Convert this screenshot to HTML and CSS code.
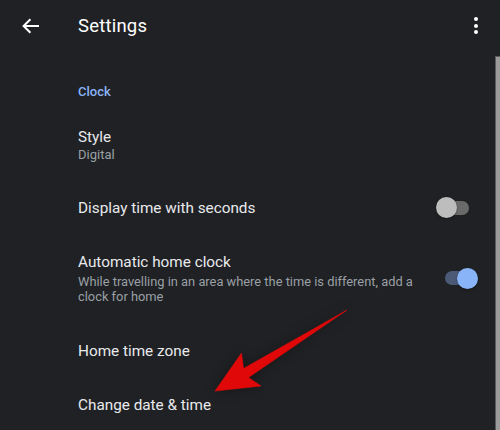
FILE: index.html
```html
<!DOCTYPE html>
<html>
<head>
<meta charset="utf-8">
<link rel="stylesheet" href="styles.css">
</head>
<body>
<div class="app">
  <header class="topbar">
    <div class="back">
      <svg width="18" height="16" viewBox="0 0 18 16"><path d="M17 8H1.8M8.4 1.2L1.6 8l6.8 6.8" fill="none" stroke="#fff" stroke-width="2"/></svg>
    </div>
    <div class="title">Settings</div>
    <div class="menu"><span></span><span></span><span></span></div>
  </header>
  <div class="body">
    <main class="content">
      <div class="section">Clock</div>
      <div class="row">
        <div class="text">
          <div class="primary">Style</div>
          <div class="secondary">Digital</div>
        </div>
      </div>
      <div class="row">
        <div class="text"><div class="primary">Display time with seconds</div></div>
        <div class="switch off"><div class="track"></div><div class="thumb"></div></div>
      </div>
      <div class="row multi">
        <div class="text">
          <div class="primary">Automatic home clock</div>
          <div class="secondary long">While travelling in an area where the time is different, add a<br>clock for home</div>
        </div>
        <div class="switch on"><div class="track"></div><div class="thumb"></div></div>
      </div>
      <div class="row">
        <div class="text"><div class="primary">Home time zone</div></div>
      </div>
      <div class="row">
        <div class="text"><div class="primary">Change date &amp; time</div></div>
      </div>
    </main>
    <div class="scrollbar"></div>
  </div>
  <svg class="pointer" width="500" height="430" viewBox="0 0 500 430">
    <polygon points="347,310 243.5,368.5 241.5,353 215,391 261,386 248.5,377.5" fill="#e00808" stroke="#e00808" stroke-width="0.6" stroke-linejoin="round"/>
  </svg>
</div>
</body>
</html>
```

FILE: styles.css
```css
html, body {
  margin: 0;
  padding: 0;
  background: #202124;
}
.app {
  position: relative;
  width: 500px;
  height: 430px;
  overflow: hidden;
  background: #202124;
  font-family: Roboto, "Liberation Sans", sans-serif;
  color: #e8eaed;
  display: flex;
  flex-direction: column;
}
.topbar {
  height: 56px;
  flex: 0 0 56px;
  display: flex;
  align-items: flex-start;
}
.back {
  width: 18px;
  height: 16px;
  margin: 18px 0 0 22px;
  display: flex;
}
.title {
  margin: 14px 0 0 38px;
  font-size: 18.5px;
  line-height: 24px;
  color: #ffffff;
  letter-spacing: 0.2px;
  flex: 1;
}
.menu {
  display: flex;
  flex-direction: column;
  gap: 2.5px;
  margin: 17px 22px 0 0;
}
.menu span {
  width: 4px;
  height: 4px;
  border-radius: 50%;
  background: #fff;
}
.body {
  flex: 1;
  display: flex;
  min-height: 0;
}
.content {
  flex: 1;
  display: flex;
  flex-direction: column;
}
.scrollbar {
  width: 4px;
  background: #9b9b9b;
  border-left: 1px solid #5a5a5a;
  border-top: 1px solid #5a5a5a;
}
.section {
  margin: 28px 0 10px 78px;
  font-size: 13px;
  line-height: 16px;
  font-weight: 500;
  color: #8ab4f8;
}
.row {
  display: flex;
  align-items: center;
  padding: 17px 17px 17px 78px;
  flex-shrink: 0;
}
.row.multi {
  padding-bottom: 20px;
}
.text {
  flex: 1;
}
.primary {
  font-size: 15.3px;
  line-height: 20px;
  color: #e8eaed;
}
.secondary {
  font-size: 13px;
  line-height: 16px;
  color: #9aa0a6;
}
.secondary.long {
  font-size: 12.85px;
  line-height: 15px;
  margin-top: 2px;
}
.switch {
  position: relative;
  width: 42px;
  height: 21px;
  margin-left: 20px;
}
.track {
  position: absolute;
  left: 10px;
  top: 3.5px;
  width: 23px;
  height: 14px;
  border-radius: 7px;
}
.thumb {
  position: absolute;
  top: 0;
  width: 21px;
  height: 21px;
  border-radius: 50%;
  box-shadow: 0 1px 2px rgba(0,0,0,0.4);
}
.switch.off .track { background: #6a6a6b; }
.switch.off .thumb { left: 0; background: #bdbdbd; }
.switch.on .track { background: #4c5a77; left: 9px; width: 24px; }
.switch.on .thumb { right: 0; background: #8ab4f8; }
.pointer {
  position: absolute;
  left: 0;
  top: 0;
  filter: drop-shadow(0 0 6px rgba(0,0,0,0.35));
}
```
